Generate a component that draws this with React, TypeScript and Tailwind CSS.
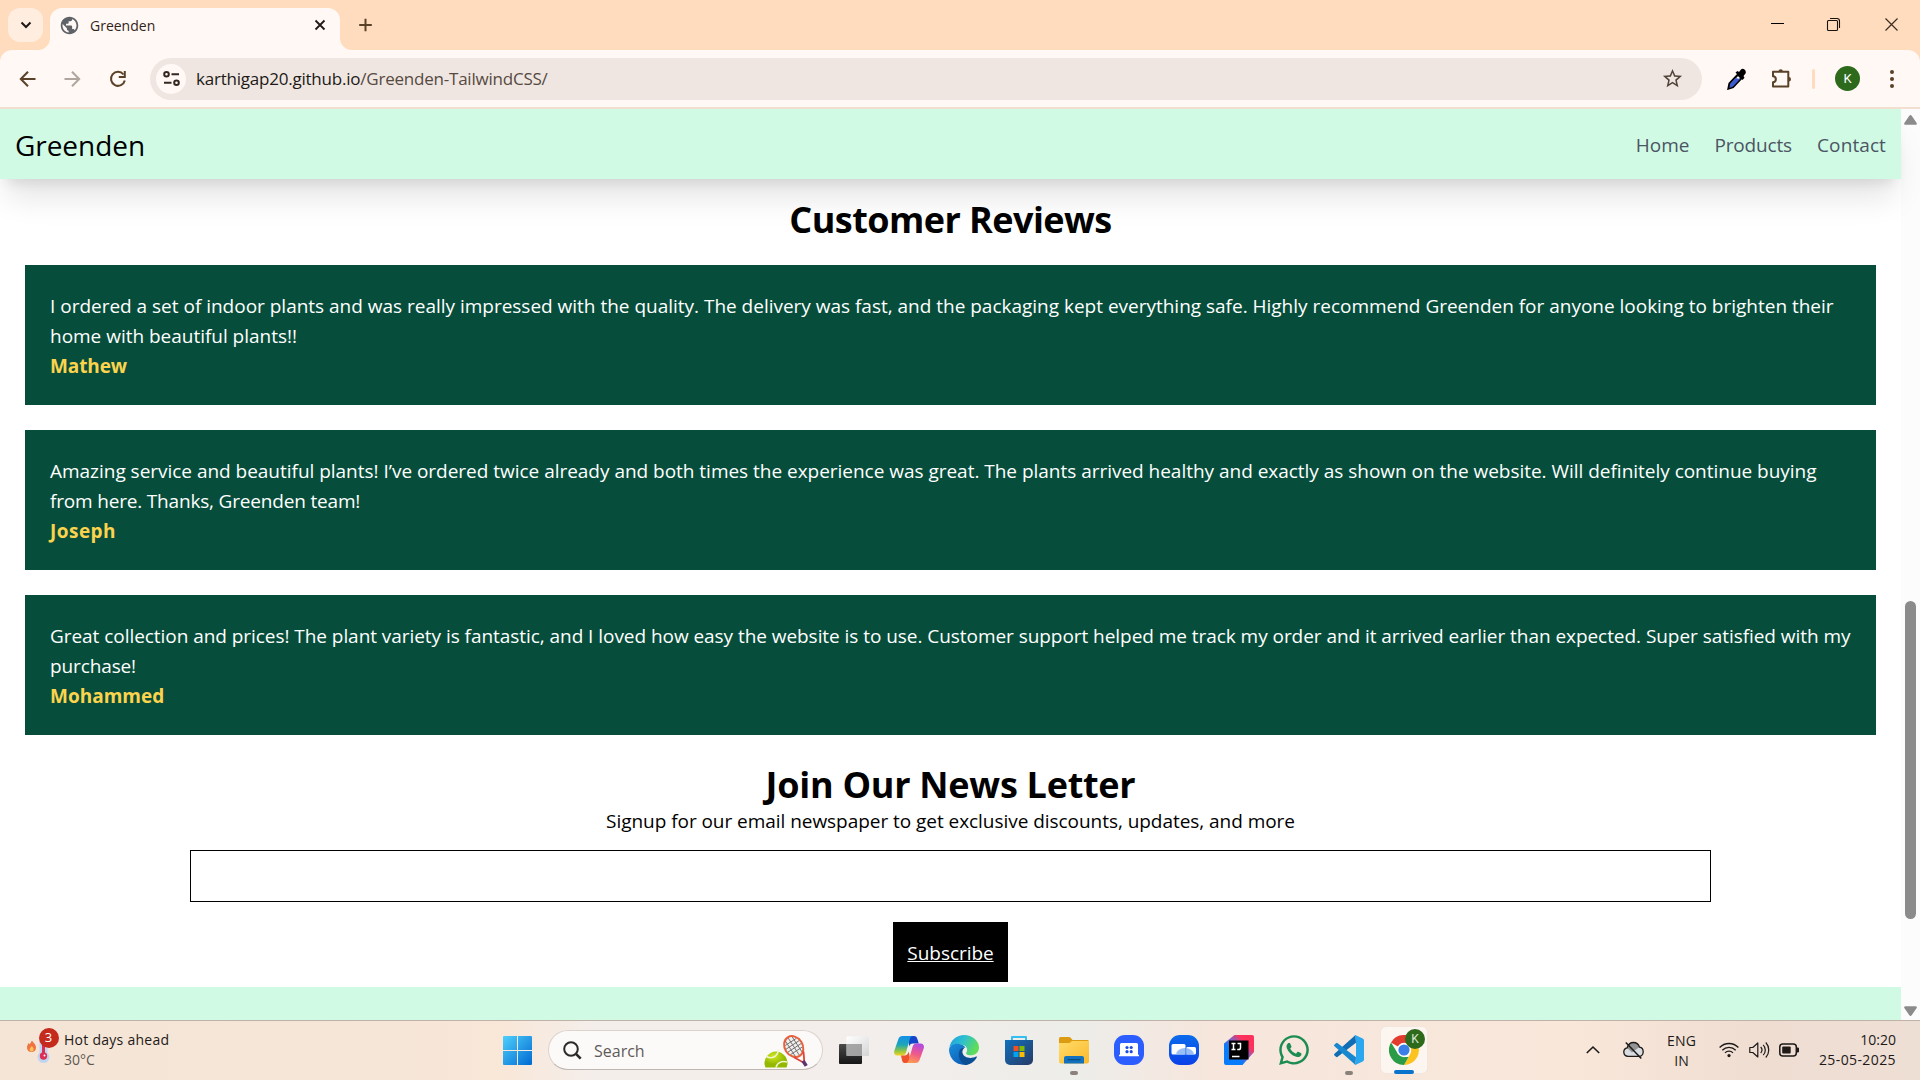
import type { ReactNode } from "react";
import { FaWhatsapp } from "react-icons/fa";
import { MdPublic, MdStarBorder } from "react-icons/md";

const reviews = [
  {
    name: "Mathew",
    nameClass: "tracking-[-0.1px]",
    lines: [
      {
        text: "I ordered a set of indoor plants and was really impressed with the quality. The delivery was fast, and the packaging kept everything safe. Highly recommend Greenden for anyone looking to brighten their",
        className: "tracking-[-0.012px]",
      },
      { text: "home with beautiful plants!!", className: "tracking-[-0.02px]" },
    ],
  },
  {
    name: "Joseph",
    nameClass: "tracking-[0.46px]",
    lines: [
      {
        text: "Amazing service and beautiful plants! I’ve ordered twice already and both times the experience was great. The plants arrived healthy and exactly as shown on the website. Will definitely continue buying",
        className: "tracking-[-0.022px]",
      },
      { text: "from here. Thanks, Greenden team!", className: "tracking-[-0.18px]" },
    ],
  },
  {
    name: "Mohammed",
    nameClass: "",
    lines: [
      {
        text: "Great collection and prices! The plant variety is fantastic, and I loved how easy the website is to use. Customer support helped me track my order and it arrived earlier than expected. Super satisfied with my",
        className: "tracking-[-0.05px]",
      },
      { text: "purchase!", className: "tracking-[-0.12px]" },
    ],
  },
];

function TitleBar() {
  return (
    <div className="flex h-[50px] items-start bg-[#ffdcbd] pl-2">
      <div className="mt-2 flex h-[34px] w-[35px] items-center justify-center rounded-xl bg-[#ffeddf]">
        <svg width="12" height="12" viewBox="0 0 12 12" fill="none" stroke="#1f1a17" strokeWidth="2">
          <path d="M1.5 3.5 6 8l4.5-4.5" />
        </svg>
      </div>
      <div className="relative ml-[7px] mt-2 flex h-[42px] w-[290px] items-center rounded-t-xl bg-[#fff8f4] pb-2 pl-[11px] pr-[14px]">
        <svg className="absolute -left-3 bottom-0" width="12" height="12" viewBox="0 0 12 12" fill="#fff8f4">
          <path d="M12 0v12H0A12 12 0 0 0 12 0" />
        </svg>
        <svg className="absolute -right-3 bottom-0" width="12" height="12" viewBox="0 0 12 12" fill="#fff8f4">
          <path d="M0 0v12h12A12 12 0 0 1 0 0" />
        </svg>
        <MdPublic className="-ml-0.5 size-[21px] text-[#5f6368]" />
        <span className="ml-[10px] text-[14px] text-[#33241a]">Greenden</span>
        <svg className="ml-auto" width="12" height="12" viewBox="0 0 12 12" stroke="#1f1a17" strokeWidth="1.8">
          <path d="m1.5 1.5 9 9m0-9-9 9" />
        </svg>
      </div>
      <svg className="ml-[18px] mt-[18px]" width="14" height="14" viewBox="0 0 14 14" stroke="#5a4127" strokeWidth="2">
        <path d="M7.500.7v12.6M1.200 7h12.6" />
      </svg>
      <div className="ml-auto mt-[17px] flex pr-[21px]">
        <svg width="15" height="15" viewBox="0 0 15 15" stroke="#000">
          <path d="M1 6.5h13" />
        </svg>
        <svg className="ml-[41px]" width="15" height="15" viewBox="0 0 15 15" fill="none" stroke="#1b140e" strokeWidth="1.1">
          <rect x="1.5" y="3.5" width="10" height="10" rx="1" />
          <path d="M4 1.5h7a2.5 2.5 0 0 1 2.5 2.5v7" />
        </svg>
        <svg className="ml-[43px]" width="15" height="15" viewBox="0 0 15 15" stroke="#3b2d22" strokeWidth="1.2">
          <path d="m1.5 1.5 12 12m0-12-12 12" />
        </svg>
      </div>
    </div>
  );
}

function Toolbar() {
  return (
    <div className="h-[59px] bg-[#ffdcbd]">
      <div className="flex h-[59px] items-center rounded-t-xl border-b-2 border-[#f3dfcf] bg-[#fff8f4] pl-[19px] pr-5">
        <svg width="18" height="18" viewBox="0 0 18 18" fill="none" stroke="#5a4127" strokeWidth="2">
          <path d="M16.5 9H2M9 1.7 1.8 9 9 16.3" />
        </svg>
        <svg className="ml-[26px]" width="18" height="18" viewBox="0 0 18 18" fill="none" stroke="#b0a69f" strokeWidth="2">
          <path d="M1.5 9H16M9 1.7 16.2 9 9 16.3" />
        </svg>
        <svg className="ml-7" width="18" height="18" viewBox="0 0 18 18" fill="none" stroke="#5a4127" strokeWidth="2">
          <path d="M15.8 10.500A7 7 0 1 1 14.5 4.5" />
          <path d="M15.8 1v6h-6" />
        </svg>
        <div className="ml-[23px] flex h-[42px] w-[1552px] items-center rounded-full bg-[#f0e6e1] pl-[6px] pr-[18px]">
          <div className="flex size-[30px] items-center justify-center rounded-full bg-[#fff8f4]">
            <svg width="17" height="17" viewBox="0 0 17 17" fill="none" stroke="#332720" strokeWidth="2">
              <circle cx="3.5" cy="4.3" r="2.3" />
              <path d="M8.5 4.3H16M1 12.7h7.5" />
              <circle cx="13.5" cy="12.7" r="2.3" />
            </svg>
          </div>
          <span className="ml-[10px] pt-px text-[17px] tracking-[-0.22px] text-[#554a42]">
            <span className="text-[#201a17]">karthigap20.github.io</span>/Greenden-TailwindCSS/
          </span>
          <MdStarBorder className="ml-auto size-[23px] text-[#51443b]" />
        </div>
        <svg className="ml-[25px]" width="20" height="22" viewBox="0 0 20 22">
          <path d="M2.5 15.5 11 6.5l3.5 3.5-8.5 9-4.5 1.5z" fill="#fff" stroke="#000" strokeWidth="2.2" />
          <path d="m3 16 5.5-6 4.5 1-7 7.500L2.5 20z" fill="#3d5bd1" />
          <path d="m8.5 4.5 2-1.500 1.500 1 2-2.500c2-2 6 1 4.500 4L16.500 8l1 1.800-2 2.200z" fill="#000" />
        </svg>
        <svg className="ml-6" width="22" height="22" viewBox="0 0 22 22" fill="none" stroke="#5a4127" strokeWidth="2" strokeLinejoin="round">
          <path d="M2 3.8h15.3v14.700H2v-4.300c3.800-.3 3.800-5.700 0-6z" />
          <path d="M7.5 3.5a2.2 2.2 0 0 1 4.400 0zM17.800 9a2.2 2.2 0 0 1 0 4.400z" fill="#5a4127" stroke="none" />
        </svg>
        <div className="ml-[19px] h-5 w-[3px] rounded-full bg-[#ffdcbd]" />
        <div className="ml-5 flex size-[25px] items-center justify-center rounded-full bg-[#2d6a1c] font-[Roboto] text-[13px] text-white">K</div>
        <svg className="ml-auto" width="16" height="20" viewBox="0 0 16 20" fill="#5a4127">
          <circle cx="8" cy="3" r="2" />
          <circle cx="8" cy="10" r="2" />
          <circle cx="8" cy="17" r="2" />
        </svg>
      </div>
    </div>
  );
}

function Page() {
  return (
    <div className="flex w-[1901px] flex-col bg-white text-[19px] leading-[30px]">
      <nav className="relative flex h-[70px] shrink-0 items-center justify-between bg-[#d1fae5] pl-[15px] pr-[15px] pt-0.5 shadow-[0_25px_31px_-6px_rgba(0,0,0,0.1),0_10px_12px_-7px_rgba(0,0,0,0.1)]">
        <h1 className="text-[28px] leading-[40px] tracking-[-0.05px]">Greenden</h1>
        <ul className="flex gap-[25px] text-[#4b5563]">
          <li>Home</li>
          <li className="tracking-[-0.15px]">Products</li>
          <li className="tracking-[0.1px]">Contact</li>
        </ul>
      </nav>
      <section className="relative pt-[18px]">
        <h2 className="h-[45px] text-center text-[36px] font-bold leading-[45px] tracking-[-0.55px]">Customer Reviews</h2>
        <div className="mx-[25px] mt-[23px] flex flex-col gap-[25px]">
          {reviews.map((r) => (
            <article key={r.name} className="h-[140px] bg-[#064e3b] px-[25px] pt-[26px] text-white">
              {r.lines.map((l) => (
                <p key={l.text} className={"whitespace-nowrap " + l.className}>{l.text}</p>
              ))}
              <p className={"font-bold text-[#fcd34d] " + r.nameClass}>{r.name}</p>
            </article>
          ))}
        </div>
      </section>
      <section className="flex flex-col items-center pt-[25px]">
        <h2 className="h-[45px] text-[36px] font-bold leading-[50px] tracking-[-0.27px]">Join Our News Letter</h2>
        <p className="pt-px tracking-[-0.045px]">Signup for our email newspaper to get exclusive discounts, updates, and more</p>
        <div className="mt-[14px] h-[52px] w-[1521px] border border-black" />
        <div className="mt-5 flex h-[60px] w-[115px] items-center justify-center bg-black pt-0.5 tracking-[-0.05px] text-white underline">Subscribe</div>
      </section>
      <footer className="mt-[5px] flex-1 bg-[#d1fae5]" />
    </div>
  );
}

function ScrollBar() {
  return (
    <div className="flex flex-1 flex-col items-center bg-[#fcfcfc] pt-[6px]">
      <svg width="13" height="10" viewBox="0 0 13 10" fill="#8b8b8b">
        <path d="M5.3.8a1.5 1.5 0 0 1 2.4 0l4.800 7a1.2 1.2 0 0 1-1 2h-10a1.2 1.2 0 0 1-1-2z" />
      </svg>
      <div className="mt-[476px] h-[318px] w-[11px] rounded-full bg-[#8b8b8b]" />
      <svg className="mt-[87px]" width="13" height="10" viewBox="0 0 13 10" fill="#8b8b8b">
        <path d="M5.3 9.2a1.5 1.5 0 0 0 2.4 0l4.800-7a1.2 1.2 0 0 0-1-2h-10a1.2 1.2 0 0 0-1 2z" />
      </svg>
    </div>
  );
}

function Icon({ children, running }: { children: ReactNode; running?: boolean }) {
  return (
    <div className="relative flex h-[58px] w-[30px] items-center">
      {children}
      {running && <div className="absolute bottom-[4px] left-[11px] h-1 w-2 rounded-full bg-[#8a817b]" />}
    </div>
  );
}

function TaskIcons() {
  return (
    <div className="flex gap-[25px]">
      <Icon>
        <svg width="30" height="30" viewBox="0 0 30 30">
          <defs>
            <linearGradient id="tvDark" x2="0" y2="1"><stop stopColor="#4a4a4a" /><stop offset="1" stopColor="#161616" /></linearGradient>
            <linearGradient id="tvLight" x2="1" y2="1"><stop stopColor="#fff" /><stop offset="1" stopColor="#d5d5d5" /></linearGradient>
          </defs>
          <rect y="9" width="23" height="20" rx="1" fill="url(#tvDark)" />
          <rect x="7.5" y="1.5" width="22.5" height="19.5" rx="1" fill="url(#tvLight)" />
          <rect x="7.5" y="9" width="15.5" height="12" fill="#8c8c8c" opacity=".75" />
        </svg>
      </Icon>
      <Icon>
        <svg width="30" height="30" viewBox="0 0 30 30">
          <defs>
            <linearGradient id="cpA" x2="0" y2="1"><stop stopColor="#148ee8" /><stop offset=".45" stopColor="#1ba6b8" /><stop offset=".75" stopColor="#89c34a" /><stop offset="1" stopColor="#f5d21b" /></linearGradient>
            <linearGradient id="cpB" x1=".6" x2=".3" y2="1"><stop stopColor="#b34be0" /><stop offset=".5" stopColor="#f0588a" /><stop offset="1" stopColor="#ff9c50" /></linearGradient>
          </defs>
          <path d="M14 1h6c2 0 2.800 1.200 3.400 3l1.400 4.500h-6c-2 0-3 1-3.600 3z" fill="#1545c8" />
          <path d="M8.500 1H19c-2 0-2.700 1.500-3.300 3.500L12 17.500c-.7 2-1.500 3-3.500 3H3.500C.5 20.500-.3 18 .4 15.500l4-11.500C5 2 6.500 1 8.500 1z" fill="url(#cpA)" />
          <path d="M7 20.500h3.500c2 0 3.500-1.500 4.200-4l1.300 6.500-2 5h-3.500c-1.500 0-2-1-2.400-2.500z" fill="#f0502b" />
          <path d="M21.500 28H11.500c2 0 2.900-1.400 3.500-3.500l3.500-12.500c.6-2.200 1.700-3.500 4-3.500h4c3 0 4 2.500 3.200 5L25.600 25c-.7 2-2.100 3-4.100 3z" fill="url(#cpB)" />
        </svg>
      </Icon>
      <Icon>
        <svg width="30" height="30" viewBox="0 0 30 30">
          <defs>
            <linearGradient id="edA" x2="1" y2=".4"><stop stopColor="#1b9de2" /><stop offset=".5" stopColor="#2fc0cf" /><stop offset="1" stopColor="#5fdc58" /></linearGradient>
            <linearGradient id="edB" x2=".6" y2="1"><stop stopColor="#1a8fdc" /><stop offset="1" stopColor="#0c60b8" /></linearGradient>
          </defs>
          <path d="M.3 13C1.500 5 8 0 15 0c8.500 0 15 6 15 12.500 0 5-4 7.800-8.500 7.800-3.800 0-5-1.500-4-3 1.500-2.200.7-6.300-3.500-7.300C8 8.500 2 9.500.3 13z" fill="url(#edA)" />
          <path d="M0 15C.3 10.500 4.500 8.500 9 8.700c3.500.2 6.500 1.800 7.500 4.300-2.500-1.200-6 1-6 5.500 0 6 5.500 10.500 9 10.500A15 15 0 0 1 0 15z" fill="url(#edB)" />
          <path d="M10.300 16c1-2.500 3.200-3.700 5-3-1.300 1-2.300 3-1.800 5 1 4.500 8 6.500 13.500 3.500.8-.3 1.200.3.7 1C24.500 28 20 30 16 30c-4.500-2-7.500-9-5.700-14z" fill="#0b4f94" />
        </svg>
      </Icon>
      <Icon>
        <svg width="30" height="30" viewBox="0 0 30 30">
          <defs><linearGradient id="st" x2="1" y2="1"><stop stopColor="#0f71bd" /><stop offset="1" stopColor="#283a66" /></linearGradient></defs>
          <path d="M8 6.500V2h14v4.500" fill="none" stroke="#35bff0" strokeWidth="2" strokeLinejoin="round" />
          <path d="M1 5h28v20a5 5 0 0 1-5 5H6a5 5 0 0 1-5-5z" fill="url(#st)" />
          <path d="M8 5V2.500M22 5V2.500" stroke="#35bff0" strokeWidth="2" />
          <path fill="#f25022" d="M9.500 11h5v5h-5z" /><path fill="#7fba00" d="M15.500 11h5v5h-5z" />
          <path fill="#00a4ef" d="M9.500 17h5v5h-5z" /><path fill="#ffb900" d="M15.500 17h5v5h-5z" />
        </svg>
      </Icon>
      <Icon running>
        <svg width="30" height="30" viewBox="0 0 30 30">
          <defs><linearGradient id="fx" x2="1" y2="1"><stop stopColor="#ffdc6a" /><stop offset="1" stopColor="#fbb92c" /></linearGradient></defs>
          <path d="M0 3.500A1.500 1.500 0 0 1 1.500 2H10q1 0 1.700.8L13.500 5H28.500A1.500 1.500 0 0 1 30 6.500V10H0z" fill="#dd9b12" />
          <path d="M0 8h10.500L13 6h17v20.500q0 2-2 2H2q-2 0-2-2z" fill="url(#fx)" />
          <path d="M5 28.500V23a2 2 0 0 1 2-2h16a2 2 0 0 1 2 2v5.500z" fill="#1272bd" />
          <path d="M8.500 24.700h13" stroke="#0b4a80" strokeWidth="1.2" />
        </svg>
      </Icon>
      <Icon>
        <svg width="30" height="30" viewBox="0 0 30 30">
          <rect width="30" height="30" rx="11" fill="#2b5dff" />
          <path d="M6 9.500A1.500 1.500 0 0 1 7.500 8h15A1.500 1.500 0 0 1 24 9.500v10.200h1v1.500H5v-1.500h1z" fill="#fff" />
          <g fill="#1c4de0"><circle cx="13" cy="12.5" r="1.6" /><circle cx="17.2" cy="12.5" r="1.6" /><circle cx="13" cy="16.7" r="1.6" /><circle cx="17.2" cy="16.7" r="1.6" /></g>
        </svg>
      </Icon>
      <Icon>
        <svg width="30" height="30" viewBox="0 0 30 30">
          <defs><linearGradient id="zm" x2="0" y2="1"><stop stopColor="#0b6bea" /><stop offset="1" stopColor="#0b40e8" /></linearGradient></defs>
          <rect width="30" height="30" rx="11" fill="url(#zm)" />
          <rect x="2.5" y="9" width="14" height="10.5" rx="1.5" fill="#fff" />
          <rect x="17" y="12" width="10" height="7.5" rx="1.5" fill="#fff" />
          <path d="M7 19.500a9 6.500 0 0 1 18 0z" fill="#8fb8f5" opacity=".9" />
          <path d="M16.800 13v6.500" stroke="#4b86ee" />
        </svg>
      </Icon>
      <Icon>
        <svg width="30" height="30" viewBox="0 0 30 30">
          <defs><linearGradient id="ij" x1=".1" y1=".9" x2=".9" y2=".1"><stop offset=".3" stopColor="#087cfa" /><stop offset=".55" stopColor="#7a62c8" /><stop offset=".8" stopColor="#fe315d" /></linearGradient></defs>
          <path d="M10.500 0H28q2 0 2 2v15L18.500 30H2q-2 0-2-2V8.500z" fill="url(#ij)" />
          <rect x="5" y="5.5" width="19.5" height="19" fill="#000" />
          <path d="M7.500 8.500h4M7.500 14.500h4M9.500 8.500v6M13.500 8.500h3v4.200q0 1.800-1.800 1.800h-1.500M8 21.500h7.500" stroke="#fff" strokeWidth="1.5" fill="none" />
        </svg>
      </Icon>
      <Icon><FaWhatsapp className="-mx-0.5 size-[34px] shrink-0 text-[#1c8c52]" /></Icon>
      <Icon running>
        <svg width="30" height="30" viewBox="0 0 30 30">
          <path d="m22 7.800-18.300 14q-.9.700-1.700 0L.5 20.400q-.9-.9 0-1.700L21.500 0z" fill="#0f6db5" />
          <path d="M22 22.200 3.700 8.200q-.9-.7-1.700 0L.5 9.600q-.9.900 0 1.700L21.500 30z" fill="#1788cf" />
          <path d="M21.800 29.700Q20.800 29.500 20.500 29L22 27.500V2.500L20.500 1q.5-.9 1.300-.8l6.900 3.200Q30 4 30 5.500v19q0 1.500-1.300 2.100z" fill="#2aa7ee" />
        </svg>
      </Icon>
    </div>
  );
}

function ChromeTile() {
  return (
    <div className="relative ml-4 mt-[5px] h-12 w-12 rounded-md border border-[#f3e6dd] bg-[#fcf5f0]">
      <svg className="ml-2 mt-2" width="30" height="30" viewBox="0 0 30 30">
        <path d="M15 15 2 7.500A15 15 0 0 1 28 7.500z" fill="#e33b2e" />
        <path d="M15 8h13.200A15 15 0 0 1 15 30l6.500-11.500z" fill="#fcc31e" />
        <path d="M2 7.500 8.800 18.500 15 22h4.500L15 30A15 15 0 0 1 2 7.500z" fill="#2a9b47" />
        <circle cx="15" cy="15" r="7.2" fill="#fff" />
        <circle cx="15" cy="15" r="5.6" fill="#3a7ee8" />
      </svg>
      <div className="absolute left-[24px] top-[2px] flex size-5 items-center justify-center rounded-full bg-[#2d6a1c] font-[Roboto] text-[12px] text-[#d5e5d0]">K</div>
      <div className="absolute bottom-[-1px] left-[13px] h-1 w-5 rounded-full bg-[#0a74cc]" />
    </div>
  );
}

function SearchBox() {
  return (
    <div className="ml-4 mt-[9px] flex h-10 w-[275px] items-center rounded-full border border-[#ddd3cd] border-b-[#bfb7b2] bg-[#fcfaf9] pl-[14px] pr-[10px]">
      <svg width="19" height="19" viewBox="0 0 19 19" fill="none" stroke="#2c2a29" strokeWidth="2">
        <circle cx="8" cy="8" r="6.8" />
        <path d="m12.7 12.7 5 5" strokeWidth="2.6" />
      </svg>
      <span className="ml-[12px] pt-px text-[16px] text-[#5f5b59]">Search</span>
      <svg className="ml-auto" width="50" height="36" viewBox="0 0 50 36">
        <defs><radialGradient id="ball" cx=".4" cy=".3"><stop stopColor="#d0e820" /><stop offset="1" stopColor="#94b800" /></radialGradient></defs>
        <path d="M3.400 35.500a11.500 11.500 0 1 1 21.200 0z" fill="url(#ball)" />
        <path d="M4 24.500C12 28 16 23 16.500 17.500M14 35.500c1-5 6-7 11-5.500" fill="none" stroke="#f0f6d0" strokeWidth="1.5" />
        <g transform="rotate(-33 32 15)">
          <ellipse cx="32" cy="14.5" rx="9" ry="11" fill="#efefef" stroke="#e8603c" strokeWidth="2" />
          <path d="M25.500 9h13M24 12.500h16M24 16h16M25 19.500h14M28 5.500v18M32 4.500v20M36 5.500v18" stroke="#77716f" strokeWidth=".9" />
          <path d="M26.500 24 32 34l5.500-10" fill="none" stroke="#e04338" strokeWidth="1.8" />
          <path d="M32 31.500v6" stroke="#5c3270" strokeWidth="3.5" />
        </g>
      </svg>
    </div>
  );
}

function Tray() {
  return (
    <div className="ml-auto flex h-[58px] items-center pr-6 text-[14px] leading-5 text-[#1d1a18]">
      <svg width="14" height="14" viewBox="0 0 14 14" fill="none" stroke="#1d1a18" strokeWidth="1.6"><path d="M.8 10 7 4l6.200 6" /></svg>
      <svg className="ml-[23px]" width="21" height="18" viewBox="0 0 21 18">
        <path d="M5 15.300a4.300 4.300 0 0 1-.8-8.500C5.200 3 7.500 1.500 10.500 1.500s5 1.800 6 4.600c2.300.3 3.700 2.300 3.700 4.600 0 2.600-1.800 4.600-4.200 4.600z" fill="#d9dde2" />
        <path d="M4.200 7C5.200 3 7.500 1.500 10.500 1.500s5 1.800 6 4.600L9 11.500z" fill="#939393" />
        <path d="M5 15.300a4.300 4.300 0 0 1-.8-8.500C5.200 3 7.500 1.500 10.500 1.500s5 1.800 6 4.600c2.300.3 3.700 2.300 3.700 4.600 0 2.600-1.800 4.600-4.200 4.600z" fill="none" stroke="#1d1a18" strokeWidth="1.3" />
        <path d="m2.800 1.500 15.500 16" stroke="#1d1a18" strokeWidth="1.5" />
      </svg>
      <div className="ml-[23px] pt-px text-center tracking-[0.15px]"><div>ENG</div><div>IN</div></div>
      <svg className="ml-[23px]" width="20" height="16" viewBox="0 0 20 16" fill="none" stroke="#1d1a18" strokeWidth="1.3">
        <path d="M.6 5.500a13 13 0 0 1 18.800 0M3.300 8.200a9.300 9.300 0 0 1 13.400 0M6 10.900a5.600 5.600 0 0 1 8 0" />
        <circle cx="10" cy="13.6" r="1.6" fill="#1d1a18" stroke="none" />
      </svg>
      <svg className="ml-[10px]" width="21" height="18" viewBox="0 0 21 18" fill="none" stroke="#1d1a18" strokeWidth="1.2">
        <path d="M.8 6.500h3L8.800 2v14l-5-4.500h-3zM11.700 6a4.500 4.500 0 0 1 0 6M14.200 3.800a7.500 7.500 0 0 1 0 10.400M16.800 1.500a11 11 0 0 1 0 15" strokeLinejoin="round" />
      </svg>
      <svg className="ml-[9px]" width="21" height="14" viewBox="0 0 21 14" fill="none" stroke="#1d1a18" strokeWidth="1.5">
        <rect x=".8" y="1" width="16.5" height="12" rx="3" />
        <rect x="3.2" y="3.4" width="8.5" height="7.2" rx="1" fill="#1d1a18" stroke="none" />
        <path d="M18 5h1.500v4H18z" fill="#1d1a18" strokeWidth="1" />
      </svg>
      <div className="ml-[18px] w-[78px] text-right">
        <div>10:20</div>
        <div className="-ml-2 whitespace-nowrap tracking-[0.4px]">25-05-2025</div>
      </div>
    </div>
  );
}

function TaskBar() {
  return (
    <div className="flex h-[60px] items-start border-t border-[#bfb2a8] bg-[linear-gradient(90deg,#f5e5d7_0%,#f6e6d8_20%,#f9e7d8_26%,#f4eeeb_31%,#f3eeeb_45%,#ededea_56%,#f6e6dc_63%,#f9e7da_82%,#efddd2_92%,#eedfd5_100%)]">
      <div className="flex w-[503px] pl-[26px]">
        <div className="relative mt-[7px] h-[38px] w-[38px]">
          <svg width="34" height="38" viewBox="0 0 34 38">
            <path d="M6 12.500c1 2 4 3.500 4 7 0 3-2 4.500-4.500 4.500S1 22.500 1 19.500c0-2 1-3 1.500-4.500l1 1.200C4.500 15.500 5 14 6 12.500z" fill="#ee7440" />
            <path d="M5.800 18c1.200 1.400 1.800 2.200 1.800 3.500s-.8 2-2 2-2-.8-2-2 1.200-2 2.200-3.500z" fill="#ffc25a" />
            <path d="M13.500 14h8v10.500a6 6 0 1 1-8 0z" fill="#bfd6f3" />
            <path d="M17.500 16v10" stroke="#dc2f55" strokeWidth="3" />
            <circle cx="17.5" cy="28" r="3.7" fill="#dc2f55" />
            <circle cx="18.5" cy="27.5" r="1" fill="#fff" />
          </svg>
          <div className="absolute left-[12.5px] top-0 flex size-5 items-center justify-center rounded-full bg-[#c42b1c] text-[13px] text-white">3</div>
        </div>
        <div className="mt-[9px] text-[14px] leading-5">
          <div className="tracking-[0.27px] text-[#1d1a18]">Hot days ahead</div>
          <div className="text-[#605850]">30°C</div>
        </div>
      </div>
      <svg className="mt-[15px]" width="29" height="29" viewBox="0 0 29 29">
        <defs><linearGradient id="win" x2="1" y2="1"><stop stopColor="#4fd0fb" /><stop offset="1" stopColor="#0069d2" /></linearGradient></defs>
        <path d="M1 0h13v14H0V1q0-1 1-1zM15 0h13q1 0 1 1v13H15zM0 15h14v14H1q-1 0-1-1zM15 15h14v13q0 1-1 1H15z" fill="url(#win)" />
      </svg>
      <SearchBox />
      <div className="ml-4"><TaskIcons /></div>
      <ChromeTile />
      <Tray />
    </div>
  );
}

export default function App() {
  return (
    <div className="flex h-[1080px] w-[1920px] flex-col overflow-hidden bg-white font-['Open_Sans',sans-serif] text-black">
      <TitleBar />
      <Toolbar />
      <div className="flex h-[911px]">
        <Page />
        <ScrollBar />
      </div>
      <TaskBar />
    </div>
  );
}
